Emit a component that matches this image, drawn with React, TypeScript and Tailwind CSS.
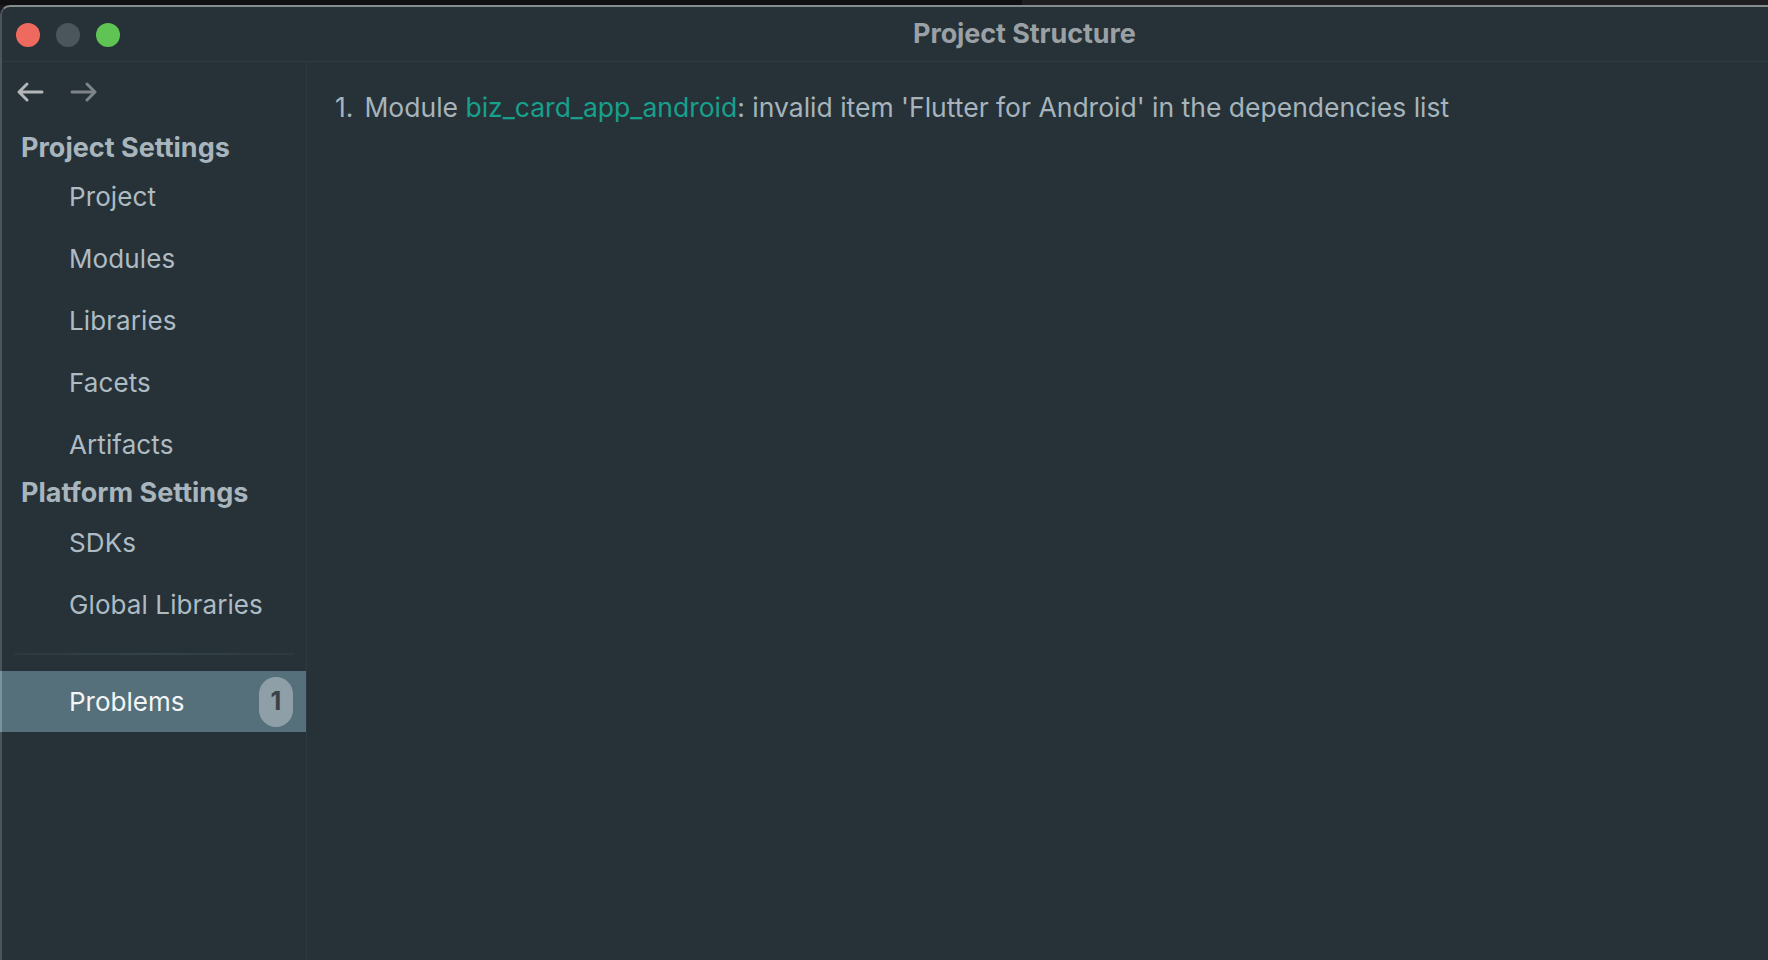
const font = { fontFamily: 'Inter, "Noto Sans", sans-serif' }

const items1 = ['Project', 'Modules', 'Libraries', 'Facets', 'Artifacts']
const items2 = ['SDKs', 'Global Libraries']

const NavItem = ({label}: {label: string}) => (
    <div className="h-[62px] flex items-center pl-[67px] text-[26px] text-[#aebbc3] tracking-[0.1px] select-none">
        {label}
    </div>
)

const App = () => {
    return (
        <div className="w-[1768px] h-[960px] bg-[#1b1b1d] flex flex-col overflow-hidden" style={font}>
            <div className="h-[5px] shrink-0 flex">
                <div className="w-[1022px] bg-[#111113]"></div>
                <div className="flex-1 bg-[#1f1f21]"></div>
            </div>
            <div className="flex-1 flex flex-col bg-[#263238] rounded-tl-[10px] border-t-2 border-l-2 border-t-[#868b8e] border-l-[#4b565c] min-h-0">
                {/* title bar */}
                <div className="h-[55px] shrink-0 flex items-center pt-[1px] border-b border-[#2d3b42]">
                    <div className="flex items-center gap-[16px] pl-[14px]">
                        <div className="w-[24px] h-[24px] rounded-full bg-[#ee6a5f]"></div>
                        <div className="w-[24px] h-[24px] rounded-full bg-[#4a555c]"></div>
                        <div className="w-[24px] h-[24px] rounded-full bg-[#5fc454]"></div>
                    </div>
                    <div className="ml-[793px] text-[27px] font-bold text-[#9aa0a4] tracking-[-0.1px]">
                        Project Structure
                    </div>
                </div>

                <div className="flex-1 flex min-h-0">
                    {/* sidebar */}
                    <div className="w-[305px] shrink-0 border-r border-[#2c3940] flex flex-col">
                        <div className="h-[59px] flex items-center gap-[26px] pl-[14px]">
                            <svg width="28" height="22" viewBox="0 0 28 22" fill="none" stroke="#b3b7ba" strokeWidth="3" strokeLinecap="round" strokeLinejoin="round">
                                <path d="M26 11H3M11 3L3 11l8 8"/>
                            </svg>
                            <svg width="28" height="22" viewBox="0 0 28 22" fill="none" stroke="#7f8488" strokeWidth="3" strokeLinecap="round" strokeLinejoin="round">
                                <path d="M2 11h23M17 3l8 8-8 8"/>
                            </svg>
                        </div>
                        <div className="mt-[11px] h-[33px] flex items-center pl-[19px] text-[27px] font-bold text-[#a8b5bd] select-none">
                            Project Settings
                        </div>
                        {items1.map((i) => <NavItem key={i} label={i}/>)}
                        <div className="h-[36px] flex items-center pl-[19px] text-[27px] font-bold text-[#a8b5bd] select-none">
                            Platform Settings
                        </div>
                        {items2.map((i) => <NavItem key={i} label={i}/>)}
                        <div className="mt-[18px] mx-[12px] h-[2px] bg-gradient-to-r from-[#2b383f] via-[#34434a] to-[#2b383f]"></div>
                        <div className="mt-[16px] h-[61px] flex items-center justify-between bg-[#56707b] border-l-2 border-[#7d939c] -ml-[2px]">
                            <span className="pl-[67px] text-[26px] text-[#f3f5f6] select-none">Problems</span>
                            <div className="mr-[13px] w-[34px] h-[50px] rounded-full bg-[#8e9fa7] flex items-center justify-center text-[25px] font-bold text-[#3a4147]">
                                1
                            </div>
                        </div>
                    </div>

                    {/* main */}
                    <div className="flex-1 pt-[29px] pl-[28px]">
                        <div className="h-[34px] flex items-center text-[26.5px] text-[#a7b4bc] whitespace-nowrap">
                            <span>1.</span>
                            <span className="ml-[11px]">Module <span className="text-[#17a08c]">biz_card_app_android</span>: invalid item 'Flutter for Android' in the dependencies list</span>
                        </div>
                    </div>
                </div>
            </div>
        </div>
    )
}

export default App
